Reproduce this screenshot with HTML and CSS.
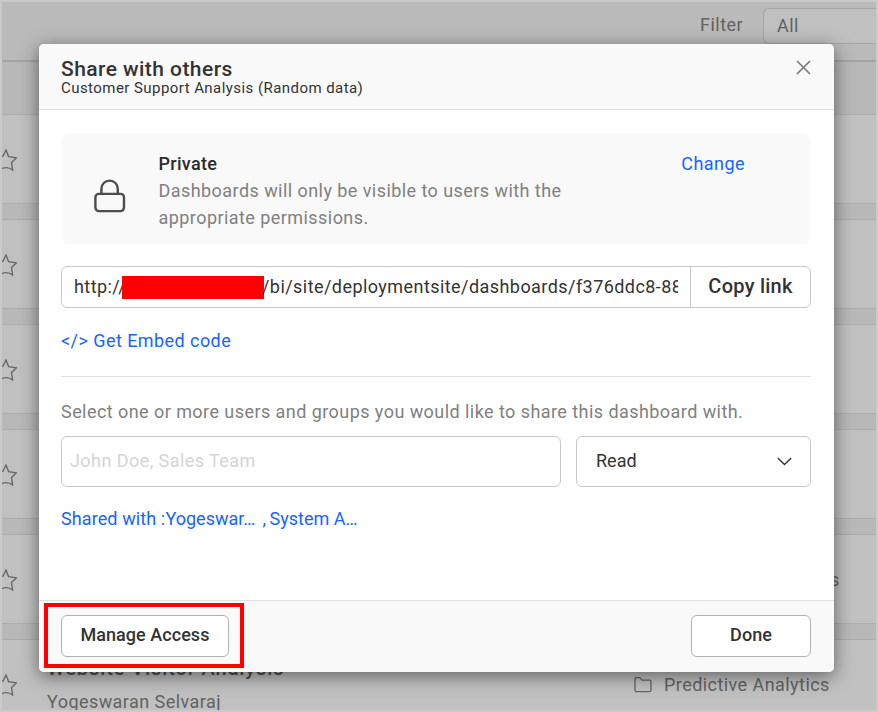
FILE: index.html
```html
<!DOCTYPE html>
<html lang="en">
<head>
<meta charset="utf-8">
<title>Share with others</title>
<link rel="stylesheet" href="styles.css">
</head>
<body>
<svg class="defs" aria-hidden="true">
  <symbol id="star" viewBox="0 0 22 22"><path d="M11 1 L13.6 7.6 L21.3 8.9 L16.5 13.5 L17.6 21 Q12 16.5 5.2 20.4 L6 13.6 L1 8 L8 7.2Z" fill="none" stroke="currentColor" stroke-width="1.4"/></symbol>
</svg>
<div class="page">
  <div class="toolbar">
    <span class="filter-label">Filter</span>
    <div class="filter-box">All</div>
  </div>
  <div class="list-head"></div>
  <div class="row"><svg class="star"><use href="#star"/></svg></div>
  <div class="row"><svg class="star"><use href="#star"/></svg></div>
  <div class="row"><svg class="star"><use href="#star"/></svg></div>
  <div class="row"><svg class="star"><use href="#star"/></svg></div>
  <div class="row"><svg class="star"><use href="#star"/></svg><span class="peek">s</span></div>
  <div class="row last">
    <svg class="star"><use href="#star"/></svg>
    <div class="item"><div class="item-name">Website Visitor Analysis</div><div class="item-owner">Yogeswaran Selvaraj</div></div>
    <div class="folder">
      <svg width="18" height="16" viewBox="0 0 18 16"><path d="M1 13V2.2Q1 .7 2.5 .7H6L8 3.1H15.4Q17 3.1 17 4.7V13Q17 14.6 15.4 14.6H2.6Q1 14.6 1 13Z" fill="none" stroke="currentColor" stroke-width="1.3"/></svg>
      <span>Predictive Analytics</span>
    </div>
  </div>
</div>

<div class="modal">
  <header class="modal-head">
    <div>
      <div class="title">Share with others</div>
      <div class="subtitle">Customer Support Analysis (Random data)</div>
    </div>
    <svg class="close" width="15" height="15" viewBox="0 0 15 15"><path d="M1 1 14 14M14 1 1 14" stroke="#777" stroke-width="1.6" fill="none"/></svg>
  </header>
  <main class="modal-body">
    <section class="privacy">
      <svg class="lock" width="32" height="34" viewBox="0 0 32 34"><path d="M7.4 15V9.8a8.1 8.1 0 0 1 16.4 0V15" fill="none" stroke="#4d4d4d" stroke-width="2.4"/><rect x="1.4" y="14.9" width="28.6" height="17.2" rx="3.5" fill="none" stroke="#4d4d4d" stroke-width="2.4"/></svg>
      <div class="privacy-text">
        <div class="privacy-title">Private</div>
        <div>Dashboards will only be visible to users with the<br>appropriate permissions.</div>
      </div>
      <a class="change">Change</a>
    </section>
    <div class="link-box">
      <div class="url"><span class="scheme">http://</span><span class="redacted"></span><span class="path">/bi/site/deploymentsite/dashboards/f376ddc8-88</span></div>
      <div class="copy">Copy link</div>
    </div>
    <a class="embed">&lt;/&gt; Get Embed code</a>
    <div class="prompt">Select one or more users and groups you would like to share this dashboard with.</div>
    <div class="inputs">
      <div class="users">John Doe, Sales Team</div>
      <div class="access"><span class="access-value">Read</span><svg width="15" height="9" viewBox="0 0 15 9"><path d="M.8 1 7.5 7.5 14.2 1" fill="none" stroke="#333" stroke-width="1.4"/></svg></div>
    </div>
    <div class="shared"><span class="shared-label">Shared with :</span><span class="user-one">Yogeswar…</span><span class="comma">,</span><span class="user-two">System A…</span></div>
  </main>
  <footer class="modal-foot">
    <div class="button manage">Manage Access</div>
    <div class="button done">Done</div>
  </footer>
  <div class="highlight"></div>
</div>
</body>
</html>
```

FILE: styles.css
```css
* { box-sizing: border-box; }
body { margin: 0; width: 878px; height: 712px; overflow: hidden; position: relative; font-family: Roboto, sans-serif; font-size: 18px; letter-spacing: .44px; color: #333; white-space: nowrap; }
.defs { display: none; }
.page { height: 712px; border: 2px solid #cacaca; background: #b8b8b8; overflow: hidden; color: #626262; }
.toolbar { height: 60px; border-bottom: 2px solid #a4a4a4; display: flex; align-items: flex-start; justify-content: flex-end; background: #bababa; }
.filter-label { margin: 12px 20px 0 0; line-height: 22px; }
.filter-box { width: 113px; height: 36px; margin-top: 6px; border: 1px solid #a6a6a6; border-right: 0; border-radius: 6px 0 0 6px; padding: 6px 13px; line-height: 22px; background: #c0c0c0; }
.list-head { height: 52px; }
.row { height: 90px; margin-bottom: 15px; border-top: 1px solid #adadad; border-bottom: 1px solid #adadad; background: #c0c0c0; display: flex; align-items: flex-start; }
.star { width: 22px; height: 22px; flex: none; margin: 34px 0 0 -7px; color: #686868; }
.peek { margin: 34px 0 0 813px; line-height: 22px; }
.item { width: 587px; margin: 17px 0 0 30px; }
.item-name { font-weight: 500; font-size: 20px; line-height: 22px; letter-spacing: .9px; color: #4f4f4f; }
.item-owner { line-height: 22px; margin-top: 12px; }
.folder { display: flex; align-items: center; gap: 12px; margin-top: 34px; line-height: 22px; }

.modal { position: absolute; left: 39px; top: 44px; width: 795px; height: 628px; border-radius: 5px; background: #fff; box-shadow: 0 4px 18px rgba(0,0,0,.5); display: flex; flex-direction: column; }
.modal-head { height: 66px; border-bottom: 1px solid #e1e1e1; background: #f9f9f9; border-radius: 5px 5px 0 0; padding: 13px 23px 0 22px; display: flex; justify-content: space-between; align-items: flex-start; }
.title { font-size: 21px; font-weight: 500; line-height: 24px; }
.subtitle { font-size: 15px; line-height: 16px; margin-top: -1px; }
.close { margin-top: 3px; }
.modal-body { flex: 1; padding: 23px 23px 0 22px; }
.privacy { height: 111px; border-radius: 8px; background: #f9f9f9; display: flex; align-items: flex-start; color: #808080; line-height: 27px; }
.lock { margin: 46px 32.5px 0 33px; flex: none; }
.privacy-text { padding-top: 17px; flex: 1; }
.privacy-title { color: #2b2b2b; font-weight: 500; letter-spacing: .3px; }
.change { margin: 17px 66px 0 0; }
.change, .embed, .shared { color: #1764ff; }
.link-box { margin-top: 22px; height: 42px; border: 1px solid #c8c8c8; border-radius: 6px; display: flex; line-height: 40px; }
.url { width: 616px; padding-left: 12px; display: flex; align-items: center; overflow: hidden; }
.scheme { width: 48px; overflow: hidden; flex: none; }
.redacted { width: 142px; height: 23px; background: #f00; flex: none; }
.path { margin-left: -2px; flex: none; }
.copy { margin-left: 12px; border-left: 1px solid #c8c8c8; flex: 1; text-align: center; font-weight: 500; font-size: 20px; letter-spacing: .25px; line-height: 38px; }
.embed { display: block; height: 69px; border-bottom: 1px solid #e1e1e1; padding-top: 22px; line-height: 22px; }
.prompt { margin-top: 24px; line-height: 22px; color: #808080; }
.inputs { display: flex; gap: 15px; margin-top: 13px; }
.users, .access { height: 51px; line-height: 48px; border: 1px solid #c8c8c8; border-radius: 6px; }
.users { width: 500px; padding-left: 8px; color: #d4d4d4; }
.access { flex: 1; display: flex; justify-content: space-between; align-items: center; padding: 0 18px 0 19px; }
.access-value { letter-spacing: 0; margin-top: -1px; }
.shared { margin-top: 21px; line-height: 22px; display: flex; letter-spacing: 0; }
.shared-label { width: 104.5px; letter-spacing: .1px; }
.user-one { width: 97px; }
.comma { width: 7px; }
.modal-foot { height: 72px; border-top: 1px solid #e1e1e1; background: #f9f9f9; border-radius: 0 0 5px 5px; display: flex; justify-content: space-between; padding: 14px 23px 0 22px; }
.button { height: 42px; border: 1px solid #b2b2b2; border-radius: 6px; background: #fff; text-align: center; font-weight: 500; line-height: 38px; letter-spacing: .05px; }
.manage { width: 168px; }
.done { width: 120px; }
.highlight { position: absolute; left: 5px; top: 559px; width: 200px; height: 65px; border: 4px solid #f00; }
```
